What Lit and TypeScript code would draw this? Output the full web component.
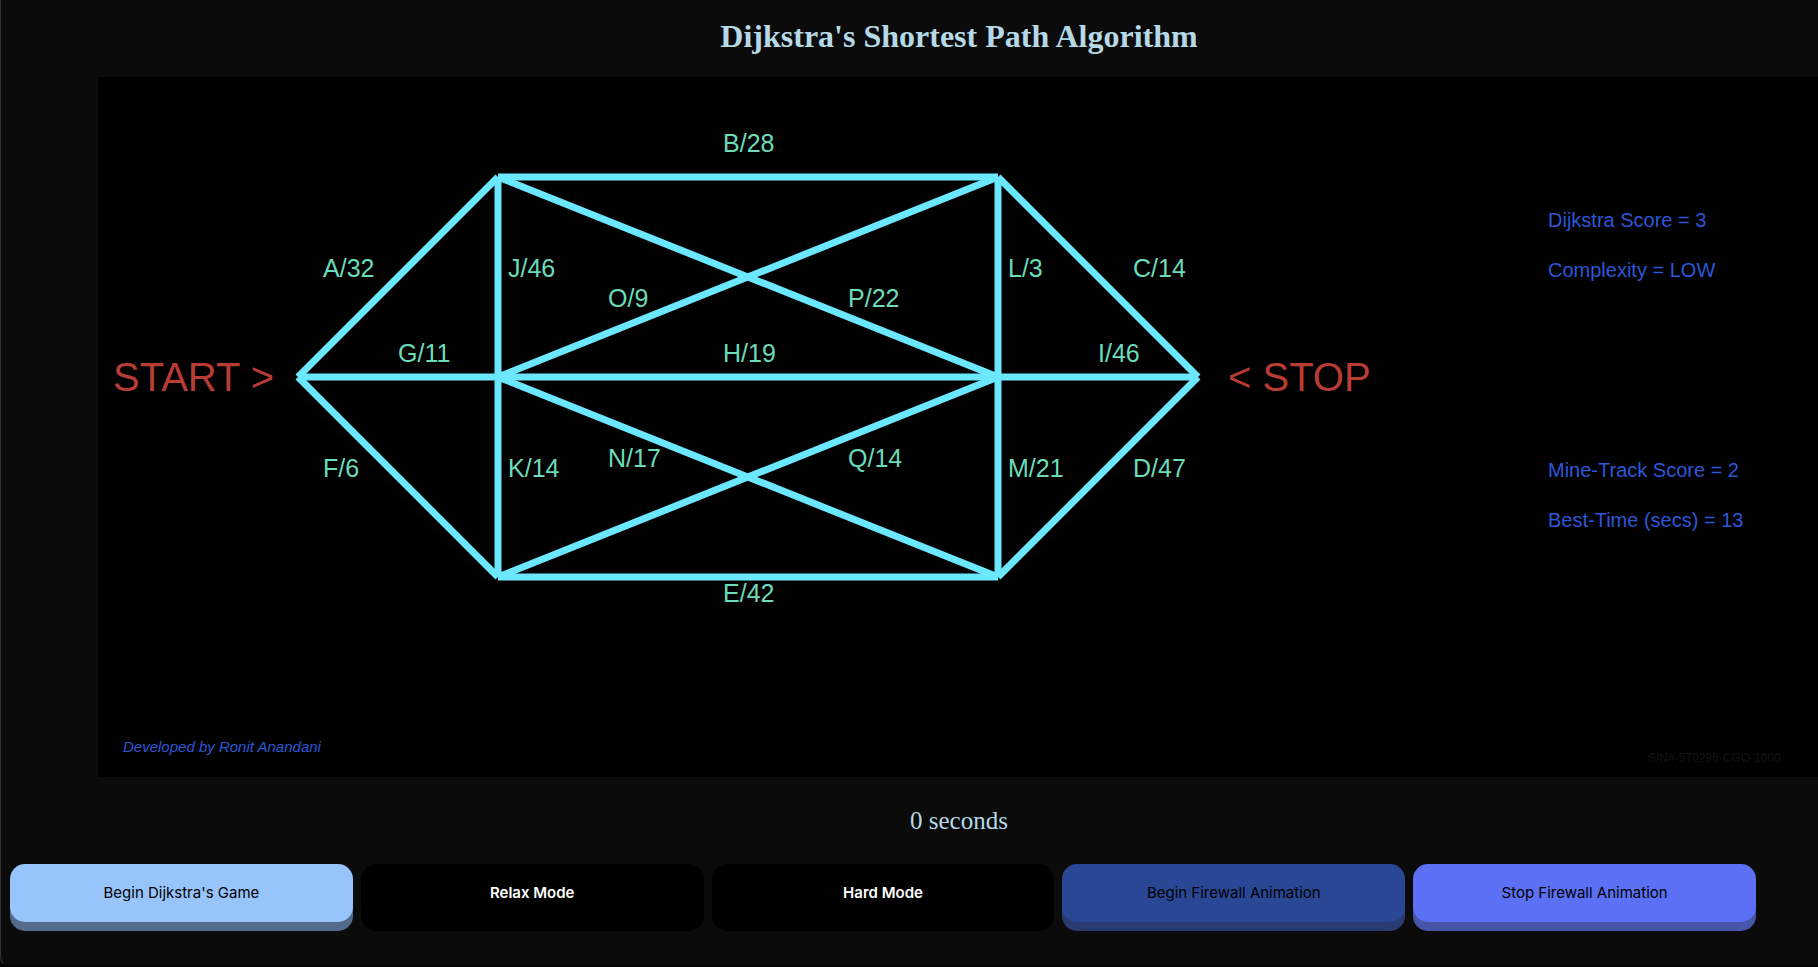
import { LitElement, html, css, svg } from "lit";
import { customElement, state } from "lit/decorators.js";

type Point = [number, number];

interface Edge {
  name: string;
  weight: number;
  from: Point;
  to: Point;
  label: Point;
}

const START: Point = [200, 300];
const STOP: Point = [1100, 300];
const TOP_LEFT: Point = [400, 100];
const TOP_RIGHT: Point = [900, 100];
const MID_LEFT: Point = [400, 300];
const MID_RIGHT: Point = [900, 300];
const LOW_LEFT: Point = [400, 500];
const LOW_RIGHT: Point = [900, 500];

const EDGES: Edge[] = [
  { name: "A", weight: 32, from: START, to: TOP_LEFT, label: [225, 200] },
  { name: "B", weight: 28, from: TOP_LEFT, to: TOP_RIGHT, label: [625, 75] },
  { name: "C", weight: 14, from: TOP_RIGHT, to: STOP, label: [1035, 200] },
  { name: "D", weight: 47, from: STOP, to: LOW_RIGHT, label: [1035, 400] },
  { name: "E", weight: 42, from: LOW_RIGHT, to: LOW_LEFT, label: [625, 525] },
  { name: "F", weight: 6, from: LOW_LEFT, to: START, label: [225, 400] },
  { name: "G", weight: 11, from: START, to: MID_LEFT, label: [300, 285] },
  { name: "H", weight: 19, from: MID_LEFT, to: MID_RIGHT, label: [625, 285] },
  { name: "I", weight: 46, from: MID_RIGHT, to: STOP, label: [1000, 285] },
  { name: "J", weight: 46, from: TOP_LEFT, to: MID_LEFT, label: [410, 200] },
  { name: "K", weight: 14, from: MID_LEFT, to: LOW_LEFT, label: [410, 400] },
  { name: "L", weight: 3, from: TOP_RIGHT, to: MID_RIGHT, label: [910, 200] },
  { name: "M", weight: 21, from: MID_RIGHT, to: LOW_RIGHT, label: [910, 400] },
  { name: "N", weight: 17, from: MID_LEFT, to: LOW_RIGHT, label: [510, 390] },
  { name: "O", weight: 9, from: MID_LEFT, to: TOP_RIGHT, label: [510, 230] },
  { name: "P", weight: 22, from: TOP_LEFT, to: MID_RIGHT, label: [750, 230] },
  { name: "Q", weight: 14, from: LOW_LEFT, to: MID_RIGHT, label: [750, 390] },
];

@customElement("path-board")
export class PathBoard extends LitElement {
  static styles = css`
    :host {
      display: block;
      background: #000;
    }
    .board {
      display: block;
      width: 100%;
      height: 700px;
      font-family: "Liberation Sans", Arial, sans-serif;
    }
    .edge {
      stroke: #6be8ff;
      stroke-width: 7;
    }
    .label {
      fill: #6bdcb9;
      font-size: 25px;
    }
    .terminal {
      fill: #b83c35;
      font-size: 40px;
    }
    .score {
      fill: #2d56d8;
      font-size: 20px;
    }
    .credit {
      fill: #2d56d8;
      font-size: 15px;
      font-style: italic;
    }
    .serial {
      fill: #141414;
      font-size: 12px;
    }
  `;

  render() {
    return html`
      <svg class="board" role="img" aria-label="Weighted graph">
        ${EDGES.map(
          (e) => svg`<line class="edge" x1=${e.from[0]} y1=${e.from[1]} x2=${e.to[0]} y2=${e.to[1]}></line>`
        )}
        ${EDGES.map((e) => svg`<text class="label" x=${e.label[0]} y=${e.label[1]}>${e.name}/${e.weight}</text>`)}
        <text class="terminal" x="15" y="314">START &gt;</text>
        <text class="terminal" x="1130" y="314">&lt; STOP</text>
        <text class="score" x="1450" y="150">Dijkstra Score = 3</text>
        <text class="score" x="1450" y="200">Complexity = LOW</text>
        <text class="score" x="1450" y="400">Mine-Track Score = 2</text>
        <text class="score" x="1450" y="450">Best-Time (secs) = 13</text>
        <text class="credit" x="25" y="675">Developed by Ronit Anandani</text>
        <text class="serial" x="1550" y="685">S/N#-570296-CGO-1000</text>
      </svg>
    `;
  }
}

@customElement("app-root")
export class AppRoot extends LitElement {
  @state() private seconds = 0;

  static styles = css`
    :host {
      display: block;
      background: #000;
    }
    .page {
      box-sizing: border-box;
      min-height: 100vh;
      overflow: hidden;
      background: #0b0b0b;
      border-left: 1px solid #333;
      border-bottom: 1px solid #000;
      border-bottom-left-radius: 10px;
    }
    .stage {
      margin-right: -2px;
      padding-left: 97px;
    }
    .title {
      margin: 0;
      padding: 18px 0 22px;
      text-align: center;
      color: #b5d9e6;
      font: bold 32px/37px "Liberation Serif", "Times New Roman", serif;
    }
    .timer {
      margin: 0;
      padding: 30px 0 29px;
      text-align: center;
      color: #b5d9e6;
      font: 25px/28px "Liberation Serif", "Times New Roman", serif;
    }
    .controls {
      display: grid;
      grid-template-columns: repeat(5, 1fr);
      gap: 8px;
      padding: 0 62px 35px 9px;
    }
    .control {
      margin: 0 0 9px;
      padding: 0;
      height: 58px;
      border: 0;
      border-radius: 15px;
      color: #000;
      font: 15px/20px Inter, sans-serif;
      cursor: pointer;
    }
    .begin {
      background: #98c4fc;
      box-shadow: 0 9px #526b8b;
    }
    .mode {
      background: #000;
      color: #fff;
      font-weight: 600;
      box-shadow: 0 9px #000;
    }
    .fire {
      background: #2a4796;
      box-shadow: 0 9px #283c72;
    }
    .stop {
      background: #5c70f6;
      box-shadow: 0 9px #4755a8;
    }
  `;

  render() {
    return html`
      <main class="page">
        <div class="stage">
          <h1 class="title">Dijkstra's Shortest Path Algorithm</h1>
          <path-board></path-board>
          <p class="timer">${this.seconds} seconds</p>
        </div>
        <div class="controls">
          <button class="control begin" type="button">Begin Dijkstra's Game</button>
          <button class="control mode" type="button">Relax Mode</button>
          <button class="control mode" type="button">Hard Mode</button>
          <button class="control fire" type="button">Begin Firewall Animation</button>
          <button class="control stop" type="button">Stop Firewall Animation</button>
        </div>
      </main>
    `;
  }
}
